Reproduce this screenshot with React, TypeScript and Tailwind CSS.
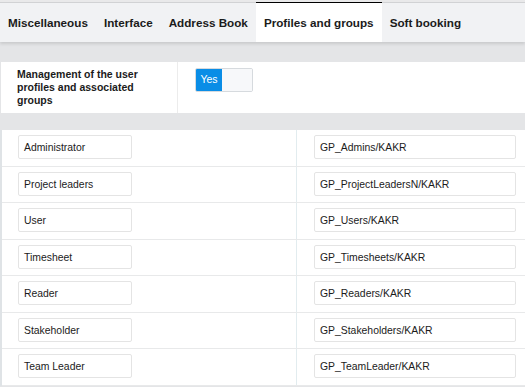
const tabs = ["Miscellaneous", "Interface", "Address Book", "Profiles and groups", "Soft booking"];

const rows = [
  ["Administrator", "GP_Admins/KAKR"],
  ["Project leaders", "GP_ProjectLeadersN/KAKR"],
  ["User", "GP_Users/KAKR"],
  ["Timesheet", "GP_Timesheets/KAKR"],
  ["Reader", "GP_Readers/KAKR"],
  ["Stakeholder", "GP_Stakeholders/KAKR"],
  ["Team Leader", "GP_TeamLeader/KAKR"],
];

export default function App() {
  return (
    <div className="w-[525px] h-[387px] overflow-hidden bg-[#e4e5e7] font-['Liberation_Sans',Arial,sans-serif] text-[#1b1b1b]">
      <div className="h-[3px] bg-[#e9e9ea] border-b border-[#d2d3d5]" />
      <div className="flex h-[39px] bg-[#f1f2f4] shadow-[0_2px_3px_rgba(0,0,0,0.12)] relative">
        {tabs.map((t) => {
          const active = t === "Profiles and groups";
          return (
            <div
              key={t}
              className={
                active
                  ? "flex items-center px-2 bg-white border-t border-black -mt-px text-[11.7px] font-bold"
                  : "flex items-center px-2 text-[11.7px] font-bold"
              }
            >
              {t}
            </div>
          );
        })}
      </div>

      <div className="mt-[20px] ml-px flex h-[51px] bg-white">
        <div className="w-[177px] pl-[16px] pr-[30px] pt-[6px] text-[10.5px] font-bold leading-[13px] border-r border-[#ececec]">
          Management of the user profiles and associated groups
        </div>
        <div className="pl-[17px] pt-[6px]">
          <div className="flex h-[24px] w-[58px] rounded-[2px] border border-[#d6dade] overflow-hidden">
            <div className="w-[26px] bg-[#0a8de6] text-white text-[10.5px] flex items-center justify-center">
              Yes
            </div>
            <div className="flex-1 bg-[#f7f8fa]" />
          </div>
        </div>
      </div>

      <div className="mt-[17px] bg-white border-l-2 border-[#dfe3e6]">
        {rows.map(([a, b]) => (
          <div key={a} className="flex h-[36.5px] border-b border-[#e8e9ea]">
            <div className="w-[295px] pl-[16px] pt-[5px] border-r border-[#e2ecef]">
              <div className="w-[114px] h-[24px] rounded-[2px] border border-[#e4e4e4] pl-[5px] text-[10.4px] leading-[23px]">
                {a}
              </div>
            </div>
            <div className="pl-[17px] pt-[5px]">
              <div className="w-[202px] h-[24px] rounded-[2px] border border-[#e4e4e4] pl-[5px] text-[10.4px] leading-[23px]">
                {b}
              </div>
            </div>
          </div>
        ))}
      </div>
    </div>
  );
}
